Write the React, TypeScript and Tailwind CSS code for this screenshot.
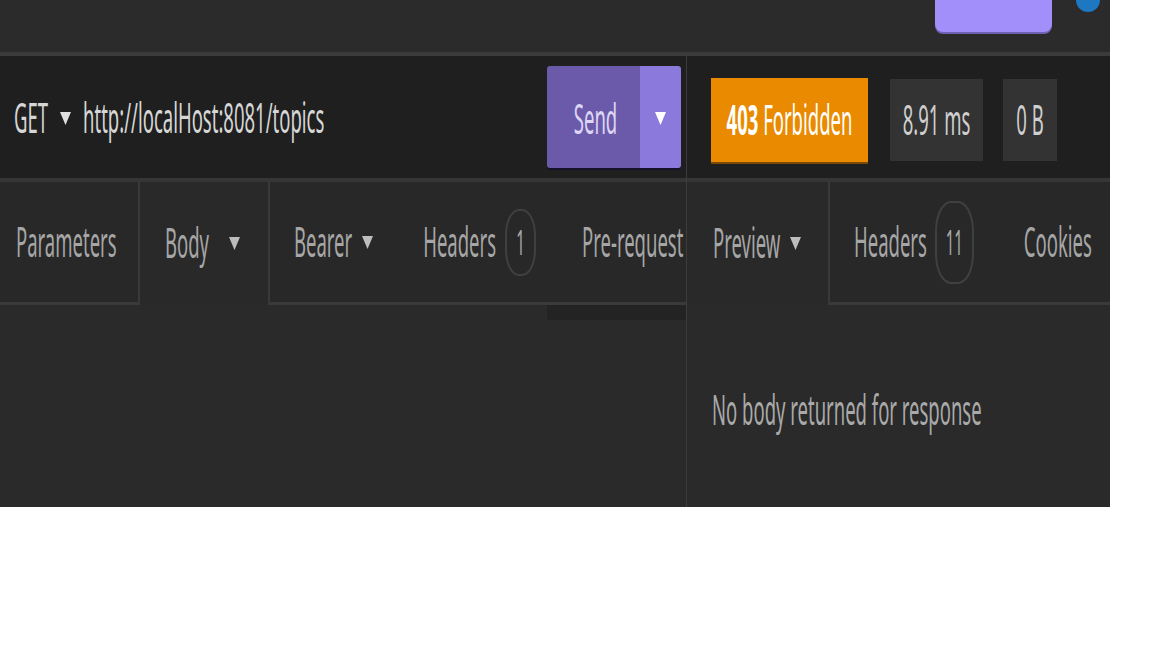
import React from "react";

// the reference is a vertically stretched capture, so every label gets a y-scale
const stretch = "inline-block scale-y-[2.25] leading-none whitespace-nowrap";

function Tri({ color = "#bdbdbd", className = "" }: { color?: string; className?: string }) {
  return (
    <svg width="11" height="15" viewBox="0 0 11 15" className={`shrink-0 ${className}`}>
      <polygon points="0,1 11,1 5.5,14" fill={color} />
    </svg>
  );
}

function Badge({ n, wide }: { n: string; wide?: boolean }) {
  return (
    <span
      className={`flex items-center justify-center border-2 border-[#404040] ${
        wide ? "w-[39px] h-[83px] rounded-[16px/30px]" : "w-[31px] h-[67px] rounded-[14px/26px]"
      }`}
    >
      <span className={`${stretch} text-[15px] text-[#a9a9a9]`}>{n}</span>
    </span>
  );
}

function App() {
  return (
    <div className="w-[1152px] h-[648px] bg-white font-['Noto_Sans',sans-serif] text-[18.5px]">
      <div className="w-[1110px] h-[507px] flex flex-col bg-[#2a2a2a] overflow-hidden">
        {/* top bar */}
        <div className="h-[56px] shrink-0 flex justify-end items-start bg-[#2b2b2b] border-b-4 border-[#3b3b3b]">
          <div className="w-[117px] h-[32px] bg-[#a28ffa] rounded-b-[8px] shadow-[0_2px_0_#6f62b0]"></div>
          <div className="w-[24px] h-[24px] rounded-full bg-[#1d78c1] -mt-[12px] ml-[24px] mr-[10px]"></div>
        </div>

        <div className="flex flex-1 min-h-0">
          {/* request pane */}
          <div className="w-[687px] shrink-0 flex flex-col border-r border-[#3c3c3c]">
            <div className="h-[126px] shrink-0 flex items-center bg-[#1f1f1f] border-b-4 border-[#363636] pl-[14px] pr-[5px] pt-[3px]">
              <span className={`${stretch} text-[#d6d6d6]`}>GET</span>
              <Tri color="#e0e0e0" className="ml-[12px]" />
              <span className={`${stretch} text-[#d6d6d6] ml-[12px]`}>http://localHost:8081/topics</span>
              <div className="ml-auto -mt-[3px] h-[102px] w-[134px] flex rounded-[3px] overflow-hidden shadow-[0_2px_0_#16122a]">
                <div className="w-[93px] bg-[#6b5aa9] flex items-center justify-center pl-[4px] pt-[4px]">
                  <span className={`${stretch} text-[#ddd6f5]`}>Send</span>
                </div>
                <div className="flex-1 bg-[#8c79dc] flex items-center justify-center pt-[2px]">
                  <Tri color="#ffffff" />
                </div>
              </div>
            </div>

            <div className="h-[123px] shrink-0 flex text-[#a6a6a6]">
              <div className="w-[138px] flex items-center pl-[16px] border-b-[3px] border-[#3a3a3a] bg-[#282828]">
                <span className={stretch}>Parameters</span>
              </div>
              <div className="w-[132px] flex items-center pl-[25px] border-x-2 border-[#3a3a3a] bg-[#292929]">
                <span className={stretch}>Body</span>
                <Tri className="ml-[20px]" />
              </div>
              <div className="flex-1 flex items-center pl-[24px] border-b-[3px] border-[#3a3a3a] bg-[#282828] overflow-hidden">
                <span className={stretch}>Bearer</span>
                <Tri className="ml-[10px]" />
                <span className={`${stretch} ml-[50px]`}>Headers</span>
                <span className="ml-[9px] shrink-0">
                  <Badge n="1" />
                </span>
                <span className={`${stretch} ml-[46px]`}>Pre-request</span>
              </div>
            </div>

            <div className="flex-1 flex flex-col bg-[#2a2a2a]">
              <div className="self-end w-[139px] h-[15px] bg-[#232323]"></div>
            </div>
          </div>

          {/* response pane */}
          <div className="flex-1 flex flex-col">
            <div className="h-[126px] shrink-0 flex items-center bg-[#1f1f1f] border-b-4 border-[#363636] pl-[24px] pt-[6px]">
              <div className="w-[157px] h-[84px] bg-[#e98a00] flex items-center justify-center text-white shadow-[0_2px_0_#7a4a06]">
                <span className={stretch}>
                  <b className="font-bold">403</b> Forbidden
                </span>
              </div>
              <div className="ml-[22px] w-[93px] h-[82px] bg-[#333333] flex items-center justify-center text-[#cfcfcf]">
                <span className={stretch}>8.91 ms</span>
              </div>
              <div className="ml-[20px] w-[54px] h-[82px] bg-[#333333] flex items-center justify-center text-[#cfcfcf]">
                <span className={stretch}>0 B</span>
              </div>
            </div>

            <div className="h-[123px] shrink-0 flex text-[#a6a6a6]">
              <div className="w-[143px] flex items-center pl-[26px] border-r-2 border-[#3a3a3a] bg-[#292929]">
                <span className={stretch}>Preview</span>
                <Tri className="ml-[10px]" />
              </div>
              <div className="flex-1 flex items-center pl-[24px] border-b-[3px] border-[#3a3a3a] bg-[#282828]">
                <span className={stretch}>Headers</span>
                <span className="ml-[8px] shrink-0">
                  <Badge n="11" wide />
                </span>
                <span className={`${stretch} ml-[50px]`}>Cookies</span>
              </div>
            </div>

            <div className="flex-1 bg-[#2a2a2a] pl-[25px] pt-[91px] text-[#a9a9a9]">
              <span className={stretch}>No body returned for response</span>
            </div>
          </div>
        </div>
      </div>
    </div>
  );
}

export default App;
